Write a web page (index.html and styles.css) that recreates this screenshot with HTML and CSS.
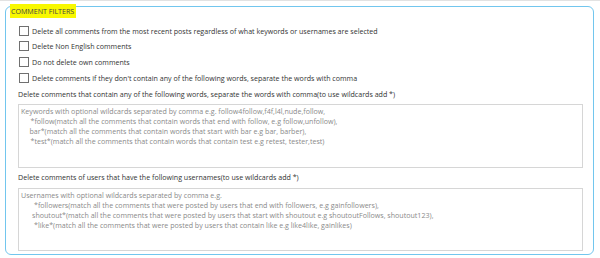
FILE: index.html
```html
<!DOCTYPE html>
<html lang="en">
<head>
    <meta charset="UTF-8">
    <title>Comment Filters</title>
    <link rel="stylesheet" href="styles.css">
</head>
<body>
    <div class="topline"></div>
    <div class="group">
        <div class="group-title">COMMENT FILTERS</div>

        <div class="checks">
            <label class="check"><input type="checkbox"> Delete all comments from the most recent posts regardless of what keywords or usernames are selected</label>
            <label class="check"><input type="checkbox"> Delete Non English comments</label>
            <label class="check"><input type="checkbox"> Do not delete own comments</label>
            <label class="check"><input type="checkbox"> Delete comments if they don't contain any of the following words, separate the words with comma</label>
        </div>

        <div class="field-label">Delete comments that contain any of the following words, separate the words with comma(to use wildcards add *)</div>
        <div class="textbox keywords">
            <div>Keywords with optional wildcards separated by comma e.g. follow4follow,f4f,l4l,nude,follow,</div>
            <div class="indent">*follow(match all the comments that contain words that end with follow, e.g follow,unfollow),</div>
            <div class="indent short">bar*(match all the comments that contain words that start with bar e.g bar, barber),</div>
            <div class="indent">*test*(match all the comments that contain words that contain test e.g retest, tester,test)</div>
        </div>

        <div class="field-label second">Delete comments of users that have the following usernames(to use wildcards add *)</div>
        <div class="textbox users">
            <div>Usernames with optional wildcards separated by comma e.g.</div>
            <div class="indent">*followers(match all the comments that were posted by users that end with followers, e.g gainfollowers),</div>
            <div class="indent short">shoutout*(match all the comments that were posted by users that start with shoutout e.g shoutoutFollows, shoutout123),</div>
            <div class="indent">*like*(match all the comments that were posted by users that contain like e.g like4like, gainlikes)</div>
        </div>
    </div>
</body>
</html>
```

FILE: styles.css
```css
body {
    margin: 0;
    font-family: "Open Sans", "Noto Sans", sans-serif;
    font-size: 7.1px;
    color: #333;
    background-color: #fff;
}
.topline {
    height: 1px;
    background-color: #e2e2e2;
}
.group {
    box-sizing: border-box;
    height: 249px;
    margin: 5px 6px 0 5px;
    padding: 0 10px 0 12px;
    border: 1px solid #72c6ee;
    border-radius: 6px;
}
.group-title {
    width: fit-content;
    height: 14px;
    line-height: 14px;
    margin: -3px 0 0 -8px;
    padding: 0 2px 0 1px;
    background-color: #f8f800;
    color: #444;
}
.checks {
    margin-top: 5px;
}
.check {
    display: flex;
    align-items: center;
    height: 15.6px;
    color: #333;
}
.check input {
    appearance: none;
    -webkit-appearance: none;
    width: 10px;
    height: 10px;
    margin: 0 3px 0 1px;
    border: 1px solid #707070;
    background-color: #fff;
}
.field-label {
    height: 11px;
    line-height: 11px;
    margin-top: 4px;
}
.field-label.second {
    margin-top: 4.5px;
}
.textbox {
    box-sizing: border-box;
    height: 64px;
    margin-top: 3.5px;
    padding: 1px 2px;
    border: 1px solid #d6d6d6;
    white-space: nowrap;
    line-height: 10px;
    color: #8a8a8a;
    overflow: hidden;
}
.keywords .indent {
    padding-left: 9.5px;
}
.keywords .indent.short {
    padding-left: 8.5px;
}
.users {
    height: 63px;
    margin-top: 5px;
}
.users .indent {
    padding-left: 13px;
}
.users .indent.short {
    padding-left: 11px;
}
```
